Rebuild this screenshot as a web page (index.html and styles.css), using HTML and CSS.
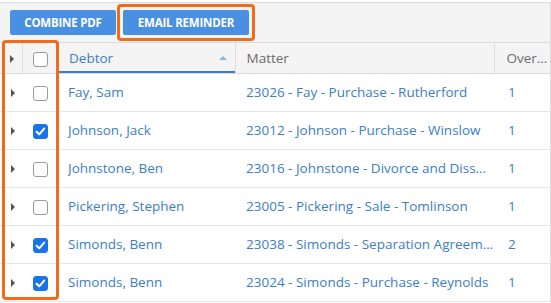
FILE: index.html
```html
<!DOCTYPE html>
<html>
<head>
<meta charset="utf-8">
<link rel="stylesheet" href="styles.css">
</head>
<body>
<div class="grid">
  <div class="toolbar">
    <button class="btn">COMBINE PDF</button>
    <button class="btn">EMAIL REMINDER</button>
  </div>
  <table class="table">
    <colgroup>
      <col class="c-exp"><col class="c-chk"><col class="c-debtor"><col class="c-matter"><col class="c-over">
    </colgroup>
    <thead>
      <tr>
        <th class="exp"><span class="tri"></span></th>
        <th class="chk"><span class="box"></span></th>
        <th class="sorted"><div class="hcell"><span>Debtor</span><span class="sort"></span></div></th>
        <th class="vline"><div class="txt">Matter</div></th>
        <th class="vline over"><div class="txt">Overdue</div></th>
      </tr>
    </thead>
    <tbody>
      <tr><td class="exp"><span class="tri"></span></td><td class="chk"><span class="box"></span></td><td><div class="txt">Fay, Sam</div></td><td class="matter"><div class="txt">23026 - Fay - Purchase - Rutherford</div></td><td class="num">1</td></tr>
      <tr><td class="exp"><span class="tri"></span></td><td class="chk"><span class="box on"><svg viewBox="0 0 15 15" width="15" height="15"><path d="M3.6 7.8 L6.2 10.3 L11.2 4.6" fill="none" stroke="#fff" stroke-width="2" stroke-linecap="round" stroke-linejoin="round"/></svg></span></td><td><div class="txt">Johnson, Jack</div></td><td class="matter"><div class="txt">23012 - Johnson - Purchase - Winslow</div></td><td class="num">1</td></tr>
      <tr><td class="exp"><span class="tri"></span></td><td class="chk"><span class="box"></span></td><td><div class="txt">Johnstone, Ben</div></td><td class="matter"><div class="txt">23016 - Johnstone - Divorce and Dissolution</div></td><td class="num">1</td></tr>
      <tr><td class="exp"><span class="tri"></span></td><td class="chk"><span class="box"></span></td><td><div class="txt">Pickering, Stephen</div></td><td class="matter"><div class="txt">23005 - Pickering - Sale - Tomlinson</div></td><td class="num">1</td></tr>
      <tr><td class="exp"><span class="tri"></span></td><td class="chk"><span class="box on"><svg viewBox="0 0 15 15" width="15" height="15"><path d="M3.6 7.8 L6.2 10.3 L11.2 4.6" fill="none" stroke="#fff" stroke-width="2" stroke-linecap="round" stroke-linejoin="round"/></svg></span></td><td><div class="txt">Simonds, Benn</div></td><td class="matter"><div class="txt">23038 - Simonds - Separation Agreement</div></td><td class="num">2</td></tr>
      <tr><td class="exp"><span class="tri"></span></td><td class="chk"><span class="box on"><svg viewBox="0 0 15 15" width="15" height="15"><path d="M3.6 7.8 L6.2 10.3 L11.2 4.6" fill="none" stroke="#fff" stroke-width="2" stroke-linecap="round" stroke-linejoin="round"/></svg></span></td><td><div class="txt">Simonds, Benn</div></td><td class="matter"><div class="txt">23024 - Simonds - Purchase - Reynolds</div></td><td class="num">1</td></tr>
    </tbody>
  </table>
  <div class="mark mark-btn"></div>
  <div class="mark mark-col"></div>
</div>
</body>
</html>
```
FILE: styles.css
```css
* { box-sizing: border-box; }
html, body { margin: 0; padding: 0; background: #fff; }
body { font-family: "Open Sans", "Noto Sans", sans-serif; font-size: 13.5px; }

.grid {
  position: relative;
  margin-top: 2px;
  width: 551px;
  border-top: 1px solid #dcdcdc;
  border-right: 1px solid #dcdcdc;
}

.toolbar {
  display: flex;
  gap: 7px;
  padding: 7px 10px;
  background: #f4f4f4;
  border-bottom: 1px solid #dcdcdc;
}

.btn {
  height: 25px;
  border: 0;
  border-radius: 2px;
  background: #4a90e2;
  color: #fff;
  font-family: "Open Sans", "Noto Sans", sans-serif;
  font-weight: 700;
  font-size: 11.5px;
  letter-spacing: -0.2px;
  padding: 0;
}
.btn:first-child { width: 106px; }
.btn:last-child { width: 126px; }

.table {
  width: 550px;
  border-collapse: collapse;
  table-layout: fixed;
}
.c-exp { width: 22px; }
.c-chk { width: 36px; }
.c-debtor { width: 177px; }
.c-matter { width: 259px; }
.c-over { width: 56px; }

.txt {
  white-space: nowrap;
  overflow: hidden;
  text-overflow: ellipsis;
}

th {
  height: 30px;
  background: #f4f4f4;
  color: #6b6b6b;
  font-weight: 400;
  text-align: left;
  padding: 0 12px 0 11px;
  border-bottom: 1px solid #dcdcdc;
}
th.sorted { color: #3b7ec8; box-shadow: inset 0 -2px 0 #3b7ec8; border-right: 1px solid #dcdcdc; }
th.vline { border-right: 1px solid #dcdcdc; }
th.over { padding: 0 0 0 12px; }
th.exp { border-right: 1px solid #dcdcdc; }
.hcell { display: flex; justify-content: space-between; align-items: center; }
.sort {
  width: 0; height: 0;
  border-left: 4px solid transparent;
  border-right: 4px solid transparent;
  border-bottom: 4px solid #8ab6e6;
  margin-right: -4px;
}

td {
  height: 38px;
  padding: 0 12px 0 10px;
  color: #3b7ec8;
  border-bottom: 1px solid #e6e6e6;
}
td.matter { padding: 0 0 0 11px; }
td.num { padding-left: 14px; }

.exp, .chk { padding: 0; text-align: center; }
.exp .tri {
  display: inline-block;
  width: 0; height: 0;
  border-top: 4px solid transparent;
  border-bottom: 4px solid transparent;
  border-left: 4px solid #555;
  vertical-align: middle;
  margin-left: 3px;
}
.box {
  display: inline-block;
  width: 15px; height: 15px;
  border: 1px solid #9a9a9a;
  border-radius: 3px;
  background: #fff;
  vertical-align: middle;
  position: relative;
}
.box.on { background: #1a73e8; border-color: #1a73e8; }
.box.on svg { position: absolute; left: -1px; top: -1px; }

.mark {
  position: absolute;
  border: 3px solid #f26a1b;
  border-radius: 4px;
  pointer-events: none;
}
.mark-btn { left: 117px; top: 1px; width: 138px; height: 37px; }
.mark-col { left: 2px; top: 37px; width: 57px; height: 260px; }
```
